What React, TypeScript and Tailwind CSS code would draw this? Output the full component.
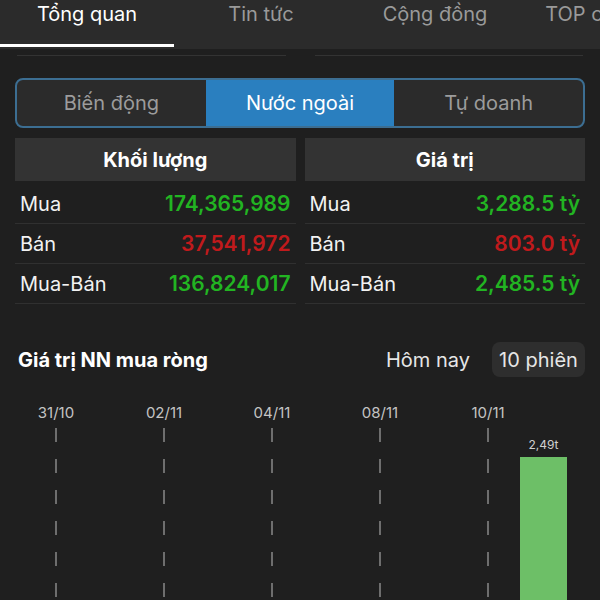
import React from "react";

const tabs = ["Tổng quan", "Tin tức", "Cộng đồng", "TOP cổ phiếu"];
const segments = ["Biến động", "Nước ngoài", "Tự doanh"];

const volumeRows = [
  { label: "Mua", value: "174,365,989", color: "text-[#22b422]" },
  { label: "Bán", value: "37,541,972", color: "text-[#c01a1c]" },
  { label: "Mua-Bán", value: "136,824,017", color: "text-[#22b422]" },
];

const valueRows = [
  { label: "Mua", value: "3,288.5 tỷ", color: "text-[#22b422]" },
  { label: "Bán", value: "803.0 tỷ", color: "text-[#c01a1c]" },
  { label: "Mua-Bán", value: "2,485.5 tỷ", color: "text-[#22b422]" },
];

const dates = ["31/10", "02/11", "04/11", "08/11", "10/11"];

function StatColumn({ title, rows }: { title: string; rows: typeof volumeRows }) {
  return (
    <div className="flex flex-col">
      <div className="h-[43px] mb-[3px] bg-[#333333] flex items-center justify-center text-[20px] font-bold text-white">
        {title}
      </div>
      {rows.map((r) => (
        <div
          key={r.label}
          className="h-[40px] flex items-center justify-between px-[5px] border-b border-[#303030] text-[20px]"
        >
          <span className="text-[#f2f2f2]">{r.label}</span>
          <span className={`text-[21px] font-semibold ${r.color}`}>{r.value}</span>
        </div>
      ))}
    </div>
  );
}

function DashedLine() {
  return (
    <div className="flex flex-col items-center gap-[17px] pt-[6px]">
      {Array.from({ length: 6 }).map((_, i) => (
        <div key={i} className="w-[2px] h-[14px] bg-[#6e6e6e]" />
      ))}
    </div>
  );
}

export default function App() {
  return (
    <div
      className="w-[600px] h-[600px] overflow-hidden bg-[#1f1f1f]"
      style={{ fontFamily: "Inter, 'Noto Sans', sans-serif" }}
    >
      {/* Top tabs */}
      <div className="h-[49px] bg-[#2b2b2b] flex overflow-hidden relative">
        {tabs.map((t, i) => (
          <div
            key={t}
            className={`w-[174px] shrink-0 flex justify-center pt-[1px] text-[20px] leading-[26px] whitespace-nowrap ${
              i === 0 ? "text-white" : "text-[#9a9a9a]"
            }`}
          >
            {t}
          </div>
        ))}
        <div className="absolute left-0 bottom-[2px] w-[174px] h-[3px] bg-white" />
      </div>

      <div className="px-[15px]">
        <div className="flex gap-[29px] pt-[6px] px-[2px]">
          <div className="flex-1 h-[1px] bg-[#333333]" />
          <div className="flex-1 h-[1px] bg-[#333333]" />
        </div>

        {/* Segmented control */}
        <div className="mt-[22px] h-[50px] rounded-[8px] border-2 border-[#3c6e92] bg-[#2b2b2b] flex overflow-hidden">
          {segments.map((s, i) => (
            <div
              key={s}
              className={`flex-1 flex items-center justify-center text-[20px] ${
                i === 1 ? "bg-[#2a7fbf] text-white" : "text-[#9c9c9c]"
              }`}
            >
              {s}
            </div>
          ))}
        </div>

        {/* Stats */}
        <div className="mt-[10px] grid grid-cols-2 gap-[9px]">
          <StatColumn title="Khối lượng" rows={volumeRows} />
          <StatColumn title="Giá trị" rows={valueRows} />
        </div>

        {/* Chart header */}
        <div className="mt-[38px] flex items-center justify-between">
          <div className="pl-[3px] text-[20px] font-bold text-white">Giá trị NN mua ròng</div>
          <div className="flex items-center gap-[22px]">
            <span className="text-[20px] text-[#e6e6e6]">Hôm nay</span>
            <span className="h-[35px] w-[93px] rounded-[8px] bg-[#2e2e2e] flex items-center justify-center text-[20px] text-[#e6e6e6]">
              10 phiên
            </span>
          </div>
        </div>
      </div>

      {/* Chart */}
      <div className="mt-[27px] pl-[2px] flex">
        {dates.map((d) => (
          <div key={d} className="w-[108px] shrink-0 flex flex-col items-center">
            <span className="text-[15px] leading-[18px] text-[#c4c4c4]">{d}</span>
            <DashedLine />
          </div>
        ))}
        <div className="-ml-[22px] w-[47px] flex flex-col items-center pt-[33px]">
          <span className="text-[12px] leading-[15px] text-[#cfcfcf] whitespace-nowrap">2,49t</span>
          <div className="mt-[5px] w-[47px] h-[160px] bg-[#6dbf67]" />
        </div>
      </div>
    </div>
  );
}
